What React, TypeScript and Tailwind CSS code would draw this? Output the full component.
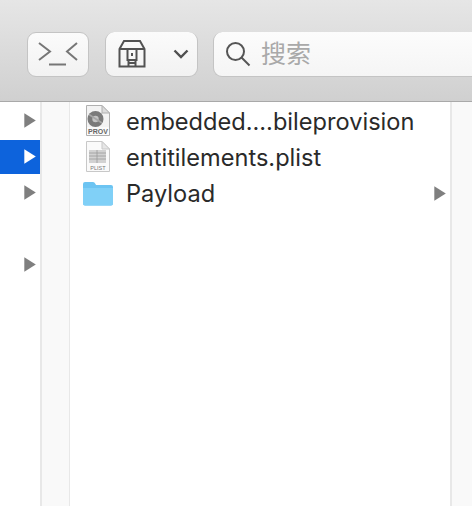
import React from "react";

const sans = "font-['Inter','Liberation_Sans','Noto_Sans_CJK_SC',sans-serif]";

function Arrow({ color = "#7f7f7f" }: { color?: string }) {
  return (
    <svg width="12" height="15" viewBox="0 0 12 15" className="block">
      <path d="M0.3 0.3 L11.8 7.5 L0.3 14.7 Z" fill={color} />
    </svg>
  );
}

function TerminalIcon() {
  return (
    <svg width="40" height="24" viewBox="0 0 40 24" fill="none" stroke="#767676" strokeWidth="2">
      <path d="M1 1 L12 9.5 L1 18" />
      <path d="M39 1 L29 9.5 L39 18" />
      <path d="M11 22.5 H28" />
    </svg>
  );
}

function ArchiveIcon() {
  return (
    <svg width="28" height="30" viewBox="0 0 28 30" fill="none" stroke="#525252" strokeWidth="2">
      <path d="M1.5 10 L6 2 H22 L26.5 10 V27.5 H1.5 Z" />
      <path d="M1.5 10 H26.5" />
      <rect x="9.5" y="10" width="9" height="11" />
      <rect x="13" y="14" width="2" height="3" fill="#525252" stroke="none" />
      <path d="M10.5 21 V27.5 M17.5 21 V27.5 M10.5 24 H17.5" />
    </svg>
  );
}

function SearchIcon() {
  return (
    <svg width="26" height="26" viewBox="0 0 26 26" fill="none" stroke="#555" strokeWidth="2">
      <circle cx="10.5" cy="10.5" r="8.5" />
      <path d="M16.5 16.5 L24.5 24.5" />
    </svg>
  );
}

function ProvIcon() {
  return (
    <svg width="24" height="32" viewBox="0 0 24 32">
      <path d="M0.5 0.5 H16 L23.5 8 V30.5 H0.5 Z" fill="#f3f3f3" stroke="#b0b0b0" />
      <path d="M16 0.5 V8 H23.5 Z" fill="#dcdcdc" stroke="#b0b0b0" />
      <circle cx="9.5" cy="14" r="8" fill="#7a7a7a" />
      <circle cx="9.5" cy="14" r="3.2" fill="#c4c4c4" />
      <path d="M3 9.5 L16 18" stroke="#a5a5a5" strokeWidth="1.5" />
      <rect x="1" y="22" width="22" height="8" fill="#fafafa" />
      <text x="12" y="29" textAnchor="middle" fontSize="7" fontWeight="700" fill="#666" fontFamily="Liberation Sans">PROV</text>
    </svg>
  );
}

function PlistIcon() {
  return (
    <svg width="24" height="32" viewBox="0 0 24 32" className="-mt-[1px]">
      <path d="M0.5 0.5 H16 L23.5 8 V30.5 H0.5 Z" fill="#fafafa" stroke="#c8c8c8" />
      <path d="M16 0.5 V8 H23.5 Z" fill="#e6e6e6" stroke="#c8c8c8" />
      <rect x="3" y="9" width="17" height="13" fill="#d2d2d2" />
      <path d="M3 12 H20 M3 15 H20 M3 18 H20 M11 9 V22" stroke="#9a9a9a" strokeWidth="0.8" />
      <text x="12" y="28.5" textAnchor="middle" fontSize="5.5" fill="#777" fontFamily="Liberation Sans">PLIST</text>
    </svg>
  );
}

function FolderIcon() {
  return (
    <svg width="32" height="25" viewBox="0 0 32 25">
      <path d="M1 3 Q1 1 3 1 H11 Q12.5 1 13.5 3 L14 4 H29 Q31 4 31 6 V22.5 Q31 24.5 29 24.5 H3 Q1 24.5 1 22.5 Z" fill="#6cc4f2" />
      <path d="M1 7 H31 V22.5 Q31 24.5 29 24.5 H3 Q1 24.5 1 22.5 Z" fill="#80d0f7" />
    </svg>
  );
}

const files = [
  { name: "embedded....bileprovision", icon: <ProvIcon />, folder: false },
  { name: "entitilements.plist", icon: <PlistIcon />, folder: false },
  { name: "Payload", icon: <FolderIcon />, folder: true },
];

// rows in the far-left column: 0 = arrow, 1 = selected, 2 = arrow, 3 = empty, 4 = arrow
const leftRows = ["arrow", "selected", "arrow", "empty", "arrow"];

export default function App() {
  return (
    <div className={`w-[472px] h-[506px] overflow-hidden bg-white flex flex-col ${sans}`}>
      <div className="h-[102px] shrink-0 border-b border-[#a9a9a9] bg-gradient-to-b from-[#e6e6e6] to-[#d0d0d0] flex items-start pt-[32px] pl-[27px]">
        <div className="w-[62px] h-[45px] rounded-[9px] bg-gradient-to-b from-[#fbfbfb] to-[#f2f2f2] border border-[#c4c4c4] flex items-center justify-center pb-[2px]">
          <TerminalIcon />
        </div>
        <div className="w-[93px] h-[45px] ml-[16px] rounded-[9px] bg-gradient-to-b from-[#fbfbfb] to-[#f2f2f2] border-b border-x border-[#c4c4c4] flex items-center pl-[12px]">
          <ArchiveIcon />
          <svg width="16" height="10" viewBox="0 0 16 10" fill="none" stroke="#4f4f4f" strokeWidth="2.4" className="ml-[27px]">
            <path d="M1.5 1.5 L8 8 L14.5 1.5" />
          </svg>
        </div>
        <div className="flex-1 h-[45px] ml-[15px] rounded-l-[9px] bg-gradient-to-b from-[#fcfcfc] to-[#f5f5f5] border-b border-l border-[#c4c4c4] flex items-center pl-[11px]">
          <SearchIcon />
          <span className="ml-[10px] text-[25px] leading-none text-[#a9a9a9]">搜索</span>
        </div>
      </div>

      <div className="flex-1 flex min-h-0">
        <div className="w-[40px] shrink-0 flex flex-col">
          {leftRows.map((row, i) => (
            <div key={i} className="h-[36px] flex items-end">
              <div className={`w-full h-[34px] flex items-center pl-[24px] pb-[1px] ${row === "selected" ? "bg-[#0d63dc]" : ""}`}>
                {row === "arrow" && <Arrow />}
                {row === "selected" && <Arrow color="#ffffff" />}
              </div>
            </div>
          ))}
        </div>
        <div className="w-[30px] shrink-0 bg-[#f9f9f9] border-l-2 border-r border-[#e8e8e8]" />
        <div className="w-[380px] shrink-0 flex flex-col pt-[1px]">
          {files.map((f) => (
            <div key={f.name} className="h-[36px] flex items-center">
              <div className="w-[56px] flex justify-center shrink-0">{f.icon}</div>
              <span className="text-[23.6px] leading-none text-[#2a2a2a] flex-1 pt-[2px]">{f.name}</span>
              {f.folder && <div className="pr-[4px]"><Arrow /></div>}
            </div>
          ))}
        </div>
        <div className="flex-1 bg-[#f9f9f9] border-l-2 border-[#e8e8e8]" />
      </div>
    </div>
  );
}
